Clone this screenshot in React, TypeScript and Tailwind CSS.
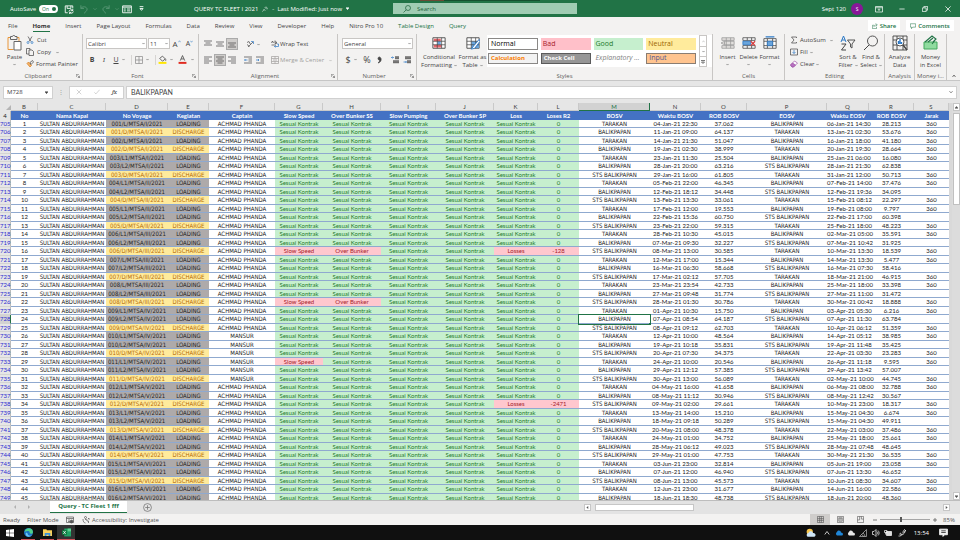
import { useState } from 'react';
import type { ReactNode } from 'react';
import clsx from 'clsx';

type Voyage = [string, string, string, string, string, string, string, string];

const FIRST_ROW = 705;
const SELECTED_ROW = 728;

// voyage, BOSV, waktu BOSV, ROB BOSV, EOSV, waktu EOSV, ROB EOSV, jarak
const T = 'TARAKAN';
const B = 'BALIKPAPAN';
const S = 'STS BALIKPAPAN';

const VOYAGES: Voyage[] = [
  ['001/L/MTSA/I/2021', T, '04-Jan-21 22:30', '37.062', B, '06-Jan-21 14:30', '28.213', '360'],
  ['001/D/MTSA/I/2021', B, '11-Jan-21 09:00', '64.137', T, '13-Jan-21 02:30', '53.676', '360'],
  ['002/L/MTSA/I/2021', T, '14-Jan-21 21:30', '51.047', B, '16-Jan-21 18:00', '41.180', '360'],
  ['002/D/MTSA/I/2021', B, '19-Jan-21 02:30', '38.999', T, '20-Jan-21 19:30', '28.664', '360'],
  ['003/L1/MTSA/I/2021', T, '23-Jan-21 11:30', '25.504', B, '25-Jan-21 06:00', '16.080', '360'],
  ['003/L2/MTSA/I/2021', B, '28-Jan-21 20:00', '63.216', S, '28-Jan-21 21:30', '62.838', ''],
  ['003/D/MTSA/I/2021', S, '29-Jan-21 16:00', '61.805', T, '31-Jan-21 12:00', '50.713', '360'],
  ['004/L1/MTSA/II/2021', T, '05-Feb-21 22:00', '46.345', B, '07-Feb-21 14:00', '37.476', '360'],
  ['004/L2/MTSA/II/2021', B, '12-Feb-21 18:12', '34.448', S, '12-Feb-21 19:36', '34.095', ''],
  ['004/D/MTSA/II/2021', S, '13-Feb-21 13:30', '33.061', T, '15-Feb-21 08:12', '22.297', '360'],
  ['005/L1/MTSA/II/2021', T, '17-Feb-21 12:00', '19.553', B, '19-Feb-21 08:00', '9.797', '360'],
  ['005/L2/MTSA/II/2021', B, '22-Feb-21 15:36', '60.750', S, '22-Feb-21 17:00', '60.398', ''],
  ['005/D/MTSA/II/2021', S, '23-Feb-21 22:00', '59.315', T, '25-Feb-21 18:00', '48.223', '360'],
  ['006/L1/MTSA/III/2021', T, '28-Feb-21 10:30', '45.015', B, '02-Mar-21 05:00', '35.591', '360'],
  ['006/L2/MTSA/III/2021', B, '07-Mar-21 09:30', '32.227', S, '07-Mar-21 10:42', '31.925', ''],
  ['006/D/MTSA/III/2021', S, '08-Mar-21 13:00', '30.585', T, '10-Mar-21 13:30', '18.539', '360'],
  ['007/L/MTSA/III/2021', T, '12-Mar-21 17:00', '15.344', B, '14-Mar-21 13:30', '5.477', '360'],
  ['007/L2/MTSA/III/2021', B, '16-Mar-21 06:30', '58.668', S, '16-Mar-21 07:30', '58.416', ''],
  ['007/D/MTSA/III/2021', S, '17-Mar-21 02:12', '57.705', T, '18-Mar-21 21:00', '46.915', '360'],
  ['008/L/MTSA/III/2021', T, '23-Mar-21 23:54', '42.733', B, '25-Mar-21 18:00', '33.398', '360'],
  ['008/L2/MTSA/III/2021', B, '27-Mar-21 09:48', '31.774', S, '27-Mar-21 11:00', '31.472', ''],
  ['008/D/MTSA/III/2021', S, '28-Mar-21 01:30', '30.786', T, '30-Mar-21 00:42', '18.888', '360'],
  ['009/L1/MTSA/IV/2021', T, '01-Apr-21 10:30', '15.750', B, '03-Apr-21 05:30', '6.216', '360'],
  ['009/L2/MTSA/IV/2021', B, '07-Apr-21 08:54', '64.187', S, '07-Apr-21 11:30', '63.784', ''],
  ['009/D/MTSA/IV/2021', S, '08-Apr-21 09:12', '62.703', T, '10-Apr-21 06:12', '51.359', '360'],
  ['010/L1/MTSA/IV/2021', T, '12-Apr-21 10:00', '48.564', B, '14-Apr-21 05:12', '38.985', '360'],
  ['010/L2/MTSA/IV/2021', B, '19-Apr-21 10:18', '35.831', S, '19-Apr-21 11:48', '35.425', ''],
  ['010/D/MTSA/IV/2021', S, '20-Apr-21 07:30', '34.375', T, '22-Apr-21 03:30', '23.283', '360'],
  ['011/L1/MTSA/IV/2021', T, '24-Apr-21 10:00', '20.546', B, '26-Apr-21 11:18', '9.595', '360'],
  ['011/L2/MTSA/IV/2021', B, '29-Apr-21 12:12', '57.385', S, '29-Apr-21 13:42', '57.007', ''],
  ['011/D/MTSA/IV/2021', S, '30-Apr-21 13:00', '56.089', T, '02-May-21 10:00', '44.745', '360'],
  ['012/L1/MTSA/V/2021', T, '04-May-21 16:00', '41.658', B, '06-May-21 08:00', '32.788', '360'],
  ['012/L2/MTSA/V/2021', B, '08-May-21 11:12', '30.946', S, '08-May-21 12:42', '30.567', ''],
  ['012/D/MTSA/V/2021', S, '09-May-21 02:00', '29.661', T, '10-May-21 23:00', '18.317', '360'],
  ['013/L1/MTSA/V/2021', T, '13-May-21 14:00', '15.210', B, '15-May-21 04:30', '6.674', '360'],
  ['013/L2/MTSA/V/2021', B, '18-May-21 09:18', '50.289', S, '15-May-21 04:30', '49.911', ''],
  ['013/D/MTSA/V/2021', S, '20-May-21 08:00', '48.378', T, '22-May-21 03:00', '37.486', '360'],
  ['014/L1/MTSA/V/2021', T, '24-May-21 01:00', '34.752', B, '25-May-21 18:00', '25.661', '360'],
  ['014/L2/MTSA/V/2021', B, '28-May-21 06:12', '49.023', S, '28-May-21 07:48', '48.645', ''],
  ['014/D/MTSA/V/2021', S, '29-May-21 01:00', '47.753', T, '30-May-21 21:30', '36.535', '360'],
  ['015/L1/MTSA/VI/2021', T, '03-Jun-21 23:00', '32.814', B, '05-Jun-21 19:00', '23.058', '360'],
  ['015/L2/MTSA/VI/2021', B, '07-Jun-21 12:00', '46.940', S, '07-Jun-21 13:30', '46.652', ''],
  ['015/D/MTSA/VI/2021', S, '08-Jun-21 13:00', '45.573', T, '10-Jun-21 08:30', '34.607', '360'],
  ['016/L1/MTSA/VI/2021', T, '12-Jun-21 23:00', '31.677', B, '14-Jun-21 16:00', '22.586', '360'],
  ['016/L2/MTSA/VI/2021', B, '18-Jun-21 18:30', '48.738', S, '18-Jun-21 20:00', '48.360', ''],
];

// penalty flags by sheet row: slow speed, over bunker SS, loss, loses R2
const FLAGS: Record<number, { slow?: boolean; bunker?: boolean; loss?: string }> = {
  720: { slow: true, bunker: true, loss: '-128' },
  726: { slow: true, bunker: true },
  733: { slow: true },
  738: { loss: '-2471' },
};

const COLUMNS = [
  { letter: 'B', title: 'No', width: 'w-[27px]' },
  { letter: 'C', title: 'Nama Kapal', width: 'w-[68px]' },
  { letter: 'D', title: 'No Voyage', width: 'w-[62px]' },
  { letter: 'E', title: 'Kegiatan', width: 'w-[41px]' },
  { letter: 'F', title: 'Captain', width: 'w-[66px]' },
  { letter: 'G', title: 'Slow Speed', width: 'w-[48px]' },
  { letter: 'H', title: 'Over Bunker SS', width: 'w-[58px]' },
  { letter: 'I', title: 'Slow Pumping', width: 'w-[55px]' },
  { letter: 'J', title: 'Over Bunker SP', width: 'w-[58px]' },
  { letter: 'K', title: 'Loss', width: 'w-[44px]' },
  { letter: 'L', title: 'Loses R2', width: 'w-[41px]' },
  { letter: 'M', title: 'BOSV', width: 'w-[71px]' },
  { letter: 'N', title: 'Waktu BOSV', width: 'w-[51px]' },
  { letter: 'O', title: 'ROB BOSV', width: 'w-[46px]' },
  { letter: 'P', title: 'EOSV', width: 'w-[80px]' },
  { letter: 'Q', title: 'Waktu EOSV', width: 'w-[42px]' },
  { letter: 'R', title: 'ROB EOSV', width: 'w-[45px]' },
  { letter: 'S', title: 'Jarak', width: 'w-[35px]' },
];

const TABS = ['File', 'Home', 'Insert', 'Page Layout', 'Formulas', 'Data', 'Review', 'View', 'Developer', 'Help', 'Nitro Pro 10', 'Table Design', 'Query'];

const GOOD = 'bg-[#c6efce] text-[#1f7a2c]';
const BAD = 'bg-[#ffc7ce] text-[#a61c2a]';

function Svg({ box = 16, className, children }: { box?: number; className?: string; children: ReactNode }) {
  return (
    <svg viewBox={`0 0 ${box} ${box}`} className={clsx('shrink-0', className)} fill="none" stroke="currentColor" strokeWidth={1.4} aria-hidden="true">
      {children}
    </svg>
  );
}

function Chevron({ className = 'h-1 w-1' }: { className?: string }) {
  return (
    <Svg box={8} className={className}>
      <path d="M1 2.5l3 3 3-3" />
    </Svg>
  );
}

function IconButton({ label, children, className }: { label: string; children: ReactNode; className?: string }) {
  return (
    <button aria-label={label} title={label} className={clsx('flex shrink-0 items-center justify-center', className)}>
      {children}
    </button>
  );
}

function TitleBar() {
  return (
    <header className="relative flex h-[17px] shrink-0 items-center bg-[#217346] text-white">
      <div className="absolute left-[420px] top-0 h-px w-6 bg-[#6b4a35]" />
      <div className="absolute left-[444px] top-0 h-px w-24 bg-[#15502f]" />
      <div className="flex w-[194px] shrink-0 items-center pl-2.5">
        <label htmlFor="autosave" className="w-[29px]">AutoSave</label>
        <span className="relative flex h-2 w-[19px] items-center rounded-full bg-white pl-[3px] text-[5px] text-[#217346]">
          <input id="autosave" type="checkbox" defaultChecked className="absolute inset-0 appearance-none" />
          On
          <span className="absolute right-[2px] h-1 w-1 rounded-full bg-[#217346]" />
        </span>
        <IconButton label="Save" className="ml-1.5">
          <Svg className="h-2.5 w-2.5">
            <path d="M14 7V3H2v11h4M5 3v4h6V3" />
            <path d="M8 12a3.4 3.4 0 016-1.5M14 8v2.6h-2.600M15 12a3.400 3.400 0 01-6 1.500M9 16v-2.600h2.600" />
          </Svg>
        </IconButton>
        <IconButton label="Undo" className="ml-[5px] gap-1 text-[#5d9a79]">
          <Svg className="h-2.5 w-2.5"><path d="M3 2v5h5M3 7c3-4 9-3 10 1 0 3-3 5-5 7" /></Svg>
          <Chevron />
        </IconButton>
        <IconButton label="Redo" className="ml-1 gap-1 text-[#5d9a79]">
          <Svg className="h-2.5 w-2.5"><path d="M13 2v5H8M13 7C10 3 4 4 3 8c0 3 3 5 5 7" /></Svg>
          <Chevron />
        </IconButton>
        <IconButton label="Form" className="ml-[3px]">
          <Svg className="h-2.5 w-2.5"><path d="M1 3h14v11H1zM1 5h14M3 8h3M8 8h5M3 11h3M8 11h5" /></Svg>
        </IconButton>
        <IconButton label="Customize" className="ml-[7px]">
          <Svg box={8} className="h-[5px] w-[5px]"><path d="M1 1h6M1.500 4h5L4 7z" /></Svg>
        </IconButton>
      </div>
      <div className="flex min-w-[199px] flex-[0_0_199px] items-center whitespace-nowrap">
        <span>QUERY TC FLEET I 2021</span>
        <Svg className="ml-1 h-1.5 w-1.5"><path d="M1 15l5-6M7 3l6 6M4 8l5 5M9 3a4 4 0 015 5" /></Svg>
        <span className="ml-1">-&nbsp; Last Modified: Just now</span>
        <Svg box={8} className="ml-1 h-[3px] w-[3px]"><path d="M0 2h8L4 7z" fill="currentColor" /></Svg>
      </div>
      <label className="flex h-[11px] w-[184px] items-center bg-[#a0ccb3] pl-2.5 text-[#1c6039]">
        <Svg className="h-2 w-2"><circle cx="10" cy="6" r="5" /><path d="M6.500 9.500L1 15" /></Svg>
        <input aria-label="Search" placeholder="Search" className="ml-1.5 w-full bg-transparent outline-none placeholder:text-[#1c6039]" />
      </label>
      <div className="ml-auto flex items-center">
        <span>Sept 120</span>
        <span className="mr-[-1px] ml-[5px] flex h-3 w-3 items-center justify-center rounded-full bg-[#881798] text-[5px]">S</span>
        <IconButton label="Ribbon display options" className="w-[34px]">
          <Svg className="h-2 w-2"><path d="M1 3h14v11H1zM1 5.500h14M8 12V8M6 9.500L8 7.500l2 2" /></Svg>
        </IconButton>
        <IconButton label="Minimize" className="w-3"><Svg className="h-1.5 w-1.5"><path d="M1 8h14" strokeWidth={2} /></Svg></IconButton>
        <IconButton label="Restore" className="w-[34px]"><Svg className="h-1.5 w-1.5"><path d="M1 5h10v10H1zM5 5V1h10v10h-4" strokeWidth={2} /></Svg></IconButton>
        <IconButton label="Close" className="mr-1.5 w-3"><Svg className="h-1.5 w-1.5"><path d="M1 1l14 14M15 1L1 15" strokeWidth={2} /></Svg></IconButton>
      </div>
    </header>
  );
}

function TabStrip() {
  return (
    <nav className="flex h-[17px] shrink-0 items-center gap-px pl-px text-[#444]">
      {TABS.map(tab => (
        <button key={tab} className="px-[7px] whitespace-nowrap">
          <span
            className={clsx(
              'flex h-[13px] items-center border-b pt-px',
              tab === 'Home' ? 'border-[#217346] font-bold text-[#333]' : 'border-transparent',
              (tab === 'Table Design' || tab === 'Query') && 'text-[#217346]',
            )}
          >
            {tab}
          </span>
        </button>
      ))}
      <div className="ml-auto flex gap-1.5 pr-1.5 font-semibold text-[#217346]">
        <button className="flex h-[11px] w-8 items-center justify-center gap-0.5 bg-white">
          <Svg className="h-1.5 w-1.5"><path d="M6 6H1v9h11v-5M5 11c0-5 4-6 8-6M10 1l4 4-4 4" /></Svg>
          Share
        </button>
        <button className="flex h-[11px] w-12 items-center justify-center gap-0.5 bg-white">
          <Svg className="h-1.5 w-1.5"><path d="M1 2h14v9H7l-3 4v-4H1z" /></Svg>
          Comments
        </button>
      </div>
    </nav>
  );
}

function Group({ name, width, launcher, children }: { name: string; width: string; launcher?: boolean; children: ReactNode }) {
  return (
    <section className={clsx('flex flex-col border-r border-[#c8c6c4]', width)}>
      <div className="flex h-[38px] items-start pt-px">{children}</div>
      <div className="flex h-2 items-center">
        <span className="flex-1 overflow-hidden text-center whitespace-nowrap text-[#605e5c]">{name}</span>
        {launcher && (
          <IconButton label={`${name} settings`} className="mr-0.5">
            <Svg className="h-1 w-1"><path d="M1 12V1h11M6 6l8 8M14 7v7H7" strokeWidth={2} /></Svg>
          </IconButton>
        )}
      </div>
    </section>
  );
}

function BigButton({ lines, width, arrow, children }: { lines: string[]; width: string; arrow?: 'below' | 'inline'; children: ReactNode }) {
  return (
    <button className={clsx('flex shrink-0 flex-col items-center leading-2 whitespace-nowrap', width)}>
      <span className="mb-0.5 flex h-4 items-center">{children}</span>
      {lines.map((line, i) => (
        <span key={line} className="flex items-center gap-0.5">
          {line}
          {arrow === 'inline' && i === lines.length - 1 && <Chevron className="h-[3px] w-[3px]" />}
        </span>
      ))}
      {arrow === 'below' && <Chevron className="mt-0.5 h-[3px] w-[3px]" />}
    </button>
  );
}

function Align({ lines }: { lines: string }) {
  return <Svg className="h-2 w-2"><path d={lines} /></Svg>;
}

function Combo({ label, value, className }: { label: string; value: string; className: string }) {
  return (
    <span className={clsx('relative flex h-[11px] items-center border border-[#c8c6c4] bg-white', className)}>
      <select aria-label={label} className="w-full appearance-none bg-transparent pl-px outline-none">
        <option>{value}</option>
      </select>
      <Chevron className="pointer-events-none absolute right-px h-[3px] w-[3px]" />
    </span>
  );
}

function Separator() {
  return <span className="h-2.5 w-px shrink-0 bg-[#d6d4d2]" />;
}

function Ribbon() {
  return (
    <div className="flex h-[46px] shrink-0 text-[#444]">
      <Group name="Clipboard" width="w-[83px] shrink-0" launcher>
        <BigButton lines={['Paste']} width="ml-1 w-[21px]" arrow="below">
          <svg viewBox="0 0 30 32" className="h-4 w-[15px]" fill="none" strokeWidth="2">
            <path d="M7 5H2v24h11M19 5h5v7" stroke="#e8963a" />
            <path d="M7 3h4c0-3 5-3 5 0h4v6H7z" fill="#f3f2f1" stroke="#666" />
            <path d="M14 13h14v17H14z" fill="#fff" stroke="#666" />
          </svg>
        </BigButton>
        <div className="flex flex-col gap-0.5 pl-px">
          <button className="flex h-2.5 items-center gap-[3px]">
            <Svg className="h-2 w-2"><path d="M4 1l6 10M12 1L6 11" /><circle cx="4" cy="13" r="2" stroke="#2b78c5" /><circle cx="12" cy="13" r="2" stroke="#2b78c5" /></Svg>
            Cut
          </button>
          <button className="flex h-2.5 items-center gap-[3px]">
            <Svg className="h-2 w-2"><path d="M6 12H1V1h7v3M6 4h6l3 3v8H6z" /></Svg>
            Copy
            <Chevron className="ml-0.5 h-[3px] w-[3px]" />
          </button>
          <button className="flex h-2.5 items-center gap-0.5 whitespace-nowrap">
            <Svg className="h-2 w-2"><path d="M2 7l6 7 3-3-6-7z" fill="#f2b36b" stroke="#d97b1a" /><path d="M8 5l5-4 2 3-5 5z" /></Svg>
            Format Painter
          </button>
        </div>
      </Group>

      <Group name="Font" width="w-[116px] shrink-0" launcher>
        <div className="flex w-full flex-col gap-[5px] pt-[3px] pl-[3px]">
          <div className="flex items-center">
            <Combo label="Font" value="Calibri" className="w-[61px]" />
            <Combo label="Font size" value="11" className="ml-px w-[22px]" />
            <IconButton label="Increase font size" className="w-[13px] text-[8px]">A<Svg box={8} className="mb-1 h-[3px] w-[3px] text-[#2b78c5]"><path d="M1 6l3-4 3 4" /></Svg></IconButton>
            <IconButton label="Decrease font size" className="w-[13px] text-[7px]">A<Svg box={8} className="mb-1 h-[3px] w-[3px] text-[#2b78c5]"><path d="M1 2l3 4 3-4" /></Svg></IconButton>
          </div>
          <div className="flex h-[11px] items-center text-[7px]">
            <IconButton label="Bold" className="w-3 font-bold">B</IconButton>
            <IconButton label="Italic" className="w-3 font-serif italic">I</IconButton>
            <IconButton label="Underline" className="w-3 underline">U</IconButton>
            <Chevron className="mr-1.5 h-[3px] w-[3px]" />
            <Separator />
            <IconButton label="Borders" className="w-3.5 text-[#888]"><Svg className="h-2 w-2"><path d="M1 1h14v14H1zM8 1v14M1 8h14" /></Svg></IconButton>
            <Chevron className="mr-1.5 h-[3px] w-[3px]" />
            <Separator />
            <IconButton label="Fill color" className="w-3">
              <Svg className="h-[9px] w-[9px]"><path d="M3 6l5-4 5 5-5 4zM13 7c2 2 1 3 0 3" /><path d="M1 14h14" stroke="#ffe600" strokeWidth={3.500} /></Svg>
            </IconButton>
            <Chevron className="mx-0.5 h-[3px] w-[3px]" />
            <IconButton label="Font color" className="w-3.5">
              <Svg className="h-[9px] w-[9px]"><path d="M4 10l4-9 4 9M5.500 7h5" /><path d="M1 14h14" stroke="#e02b20" strokeWidth={3.500} /></Svg>
            </IconButton>
            <Chevron className="ml-0.5 h-[3px] w-[3px]" />
          </div>
        </div>
      </Group>

      <Group name="Alignment" width="w-[139px] shrink-0" launcher>
        <div className="flex w-[65px] shrink-0 flex-col gap-1 pt-[3px] pl-[3px]">
          <div className="flex h-3 items-center">
            <IconButton label="Top align" className="w-3"><Align lines="M0 2h16M3 6h10M0 10h16" /></IconButton>
            <IconButton label="Middle align" className="w-3"><Align lines="M0 4h16M3 8h10M0 12h16" /></IconButton>
            <IconButton label="Bottom align" className="h-3 w-3 border border-[#aaa] bg-[#cfcdcb]"><Align lines="M0 6h16M3 10h10M0 14h16" /></IconButton>
            <span className="ml-1"><Separator /></span>
            <IconButton label="Orientation" className="ml-1 gap-[3px]">
              <Svg className="h-2 w-2"><path d="M2 9l5 4M2 5l4-2 3 6M4 14L14 4" /><path d="M10 3h5v5" stroke="#2b78c5" /></Svg>
              <Chevron className="h-[3px] w-[3px]" />
            </IconButton>
          </div>
          <div className="flex h-3 items-center">
            <IconButton label="Align left" className="w-3"><Align lines="M0 2h16M0 6h10M0 10h16M0 14h10" /></IconButton>
            <IconButton label="Center" className="h-3 w-3 border border-[#aaa] bg-[#cfcdcb]"><Align lines="M0 2h16M3 6h10M0 10h16M3 14h10" /></IconButton>
            <IconButton label="Align right" className="w-3"><Align lines="M0 2h16M6 6h10M0 10h16M6 14h10" /></IconButton>
            <IconButton label="Decrease indent" className="ml-1 w-3"><Svg className="h-2 w-2"><path d="M0 2h16M9 6h7M9 10h7M0 14h16" /><path d="M7 8H1M3 6L1 8l2 2" stroke="#2b78c5" /></Svg></IconButton>
            <IconButton label="Increase indent" className="w-3"><Svg className="h-2 w-2"><path d="M0 2h16M9 6h7M9 10h7M0 14h16" /><path d="M0 8h6M4 6l2 2-2 2" stroke="#2b78c5" /></Svg></IconButton>
          </div>
        </div>
        <div className="ml-[7px] flex flex-col gap-1 pt-[3px]">
          <button className="flex h-3 items-center gap-px">
            <Svg className="h-2 w-2"><path d="M1 6l2-4 2 4M8 1v6M8 4h3v3H8M1 10h9" /><path d="M12 8h3v5H7M9 11l-2 2 2 2" stroke="#2b78c5" /></Svg>
            Wrap Text
          </button>
          <button className="flex h-3 items-center gap-px whitespace-nowrap text-[#a19f9d]" disabled>
            <Svg className="h-2 w-2"><path d="M1 1h14v14H1zM1 5h14M1 11h14M8 1v4M8 11v4M4 8h8" /></Svg>
            Merge &amp; Center
            <Chevron className="ml-1 h-[3px] w-[3px]" />
          </button>
        </div>
      </Group>

      <Group name="Number" width="w-[79px] shrink-0" launcher>
        <div className="flex w-full flex-col gap-[5px] pt-[3px] pl-1">
          <Combo label="Number format" value="General" className="w-[71px]" />
          <div className="flex h-[11px] items-center text-[8px]">
            <IconButton label="Accounting" className="w-3 text-[9px]">$</IconButton>
            <Chevron className="mr-1 h-[3px] w-[3px]" />
            <IconButton label="Percent" className="w-3 text-[9px]">%</IconButton>
            <IconButton label="Comma" className="w-3 font-bold">
              <Svg className="h-2 w-2"><path d="M9 2a3 3 0 100 6c1 2-1 4-3 6 5-1 7-5 6-9-1-2-2-3-3-3z" fill="currentColor" /></Svg>
            </IconButton>
            <span className="ml-[3px]"><Separator /></span>
            <IconButton label="Increase decimal" className="w-3.5"><Svg className="h-2 w-2"><path d="M6 3H1M3 1L1 3l2 2" stroke="#2b78c5" /><path d="M9 1h2v5H9zM13 1h2v5h-2zM5 9h2v5H5zM9 9h2v5H9zM13 9h2v5h-2z" /></Svg></IconButton>
            <IconButton label="Decrease decimal" className="w-2.5"><Svg className="h-2 w-2"><path d="M1 12h6M5 10l2 2-2 2" stroke="#2b78c5" /><path d="M5 1h2v5H5zM9 1h2v5H9zM13 1h2v5h-2zM9 9h2v5H9zM13 9h2v5h-2z" /></Svg></IconButton>
          </div>
        </div>
      </Group>

      <Group name="Styles" width="min-w-[296px] flex-1">
        <BigButton lines={['Conditional', 'Formatting']} width="ml-0.5 w-10" arrow="inline">
          <Svg className="h-3.5 w-3.5"><path d="M1 2h14v12H1z" fill="#fff" strokeWidth={1} /><path d="M2 3h8v3H2zM2 10h9v3H2z" fill="#e8676d" stroke="none" /><path d="M6 6h4v4H6z" fill="#6aa5dc" stroke="none" /><path d="M1 6h14M1 10h14M6 2v12M11 2v12" strokeWidth={0.800} /></Svg>
        </BigButton>
        <BigButton lines={['Format as', 'Table']} width="w-[27px]" arrow="inline">
          <Svg className="h-3.5 w-3.5"><path d="M1 2h14v12H1z" fill="#fff" strokeWidth={1} /><path d="M6 6h9v8H6z" fill="#6aa5dc" stroke="none" /><path d="M1 6h14M1 10h14M6 2v12M11 2v12" strokeWidth={0.800} /><path d="M15 4L9 11l-3 4 4-1 6-8z" fill="#fff" stroke="#2b78c5" strokeWidth={1} /></Svg>
        </BigButton>
        <div className="ml-px flex h-8 flex-1 bg-white text-[7px] leading-2">
          <div className="grid flex-1 grid-cols-4 gap-x-[3px] gap-y-[3px] p-[3px] pl-px">
            <button className="border border-[#8a8886] bg-white pl-0.5 text-left text-black">Normal</button>
            <button className="bg-[#ffc0c9] pl-0.5 text-left text-[#a61c2a]">Bad</button>
            <button className="bg-[#c6efce] pl-0.5 text-left text-[#1f7a2c]">Good</button>
            <button className="bg-[#ffeb9c] pl-0.5 text-left text-[#9c6500]">Neutral</button>
            <button className="border border-[#8a8886] bg-[#f2f2f2] pl-0.5 text-left text-[6px] font-bold text-[#fa7d00]">Calculation</button>
            <button className="border border-[#5a5a5a] bg-[#969696] pl-0.5 text-left text-[6px] font-bold text-white">Check Cell</button>
            <button className="pl-0.5 text-left whitespace-nowrap text-[#7f7f7f] italic">Explanatory ...</button>
            <button className="border border-[#8a7d72] bg-[#ffc48f] pl-0.5 text-left text-[#54548c]">Input</button>
          </div>
          <div className="mr-[5px] grid w-2 grid-rows-3 border border-[#c8c6c4]">
            <IconButton label="Scroll up" className="text-[#aaa]"><Svg box={8} className="h-[3px] w-[3px]"><path d="M1 6l3-4 3 4" /></Svg></IconButton>
            <IconButton label="Scroll down" className="border-t border-[#c8c6c4]"><Chevron className="h-[3px] w-[3px]" /></IconButton>
            <IconButton label="More styles" className="border-t border-[#c8c6c4]"><Svg box={8} className="h-1 w-1"><path d="M0 1h8M1 4h6L4 7z" /></Svg></IconButton>
          </div>
        </div>
      </Group>

      <Group name="Cells" width="w-[72px] shrink-0">
        <BigButton lines={['Insert']} width="ml-1 w-[21px]" arrow="below">
          <Svg className="h-3.5 w-3.5 text-[#999]"><path d="M1 2h14v3H1zM1 11h14v3H1zM4 6h11v4H4zM6 2v12M11 2v12M4 6L0 8l4 2" fill="#e1dfdd" strokeWidth={0.900} /></Svg>
        </BigButton>
        <BigButton lines={['Delete']} width="w-[21px]" arrow="below">
          <Svg className="h-3.5 w-3.5"><path d="M1 2h14v3H1zM1 11h14v3H1zM6 2v3M11 2v3M6 11v3M11 11v3" strokeWidth={0.900} fill="#fff" /><path d="M1 6h9v4H1z" fill="#6aa5dc" stroke="#2b78c5" strokeWidth={0.900} /><path d="M10 6l5 5M15 6l-5 5" stroke="#d83b3b" /></Svg>
        </BigButton>
        <BigButton lines={['Format']} width="w-[21px]" arrow="below">
          <Svg className="h-3.5 w-3.5"><path d="M3 1h10" stroke="#2b78c5" /><path d="M1 3h14v11H1zM1 6h14M1 11h14M5 3v11M11 3v11" strokeWidth={0.900} fill="#fff" /><path d="M5 6h6v5H5z" fill="#6aa5dc" stroke="#2b78c5" strokeWidth={0.900} /></Svg>
        </BigButton>
      </Group>

      <Group name="Editing" width="w-[100px] shrink-0">
        <div className="flex w-[47px] shrink-0 flex-col gap-0.5 pl-[5px]">
          <button className="flex h-2.5 items-center gap-0.5">
            <Svg className="h-2 w-2"><path d="M13 4V2H3l5 6-5 6h10v-2" /></Svg>
            AutoSum
            <Chevron className="ml-0.5 h-[3px] w-[3px]" />
          </button>
          <button className="flex h-2.5 items-center gap-0.5">
            <Svg className="h-2 w-2"><path d="M1 2h14v12H1z" /><path d="M8 4v7M5 8l3 3 3-3" stroke="#2b78c5" /></Svg>
            Fill
            <Chevron className="h-[3px] w-[3px]" />
          </button>
          <button className="flex h-2.5 items-center gap-0.5">
            <Svg className="h-2 w-2"><path d="M1 10l8-8 6 4-8 8H4z" stroke="#9b4fa5" fill="#fff" /><path d="M1 10l4-4 6 4-4 4H4z" fill="#b871c1" stroke="#9b4fa5" /></Svg>
            Clear
            <Chevron className="h-[3px] w-[3px]" />
          </button>
        </div>
        <BigButton lines={['Sort &', 'Filter']} width="ml-1 w-6" arrow="inline">
          <Svg className="h-4 w-4"><path d="M1 7l2.500-6L6 7M2 5h3" stroke="#2b78c5" strokeWidth={1} /><path d="M1.500 9H6l-4.500 6H6" strokeWidth={1} /><path d="M7.500 5H15l-3 4v4l-1.500-1V9z" strokeWidth={0.900} /></Svg>
        </BigButton>
        <BigButton lines={['Find &', 'Select']} width="w-[22px]" arrow="inline">
          <Svg className="h-4 w-4"><circle cx="9.500" cy="6" r="5" strokeWidth={0.900} /><path d="M6 10l-5 5" strokeWidth={1} /></Svg>
        </BigButton>
      </Group>

      <Group name="Analysis" width="w-[30px] shrink-0">
        <BigButton lines={['Analyze', 'Data']} width="w-[29px]">
          <Svg className="h-4 w-4"><path d="M1 1h14v14H1zM1 5h14M1 10h14M5 1v14M11 1v14" strokeWidth={0.900} /><circle cx="8" cy="7" r="4" fill="#fff" strokeWidth={0.900} /><path d="M6.500 9V6M8 9V4M9.500 9V7" stroke="#2b78c5" /><path d="M11 10l4 5" /></Svg>
        </BigButton>
      </Group>
      <Group name="Money i..." width="w-8 shrink-0">
        <BigButton lines={['Money', 'in Excel']} width="w-[31px]">
          <Svg className="h-4 w-4 text-[#217346]"><path d="M1 7h13v7H1z" fill="#8fdb9f" stroke="#43a85c" strokeWidth={1} /><path d="M2 7l7-6 4 3-3 3M5 7l5-4M13 4l-4 5" strokeWidth={1.100} /></Svg>
        </BigButton>
      </Group>
      <div className="flex w-[13px] shrink-0 items-end justify-center pb-0.5">
        <IconButton label="Collapse ribbon"><Svg box={8} className="h-1 w-1"><path d="M1 6l3-4 3 4" /></Svg></IconButton>
      </div>
    </div>
  );
}

function FormulaBar() {
  return (
    <div className="flex h-[23px] shrink-0 items-center gap-0.5 border-t border-[#c6c6c6] bg-[#e6e6e6] pr-[3px] pl-[3px] text-[#444]">
      <span className="relative flex h-[13px] w-[50px] items-center border border-[#d0d0d0] bg-white">
        <input aria-label="Name box" defaultValue="M728" className="w-full bg-transparent pl-[3px] outline-none" />
        <Svg box={8} className="absolute right-1 h-[3px] w-[3px]"><path d="M0 2h8L4 7z" fill="currentColor" /></Svg>
      </span>
      <span className="w-3 text-center text-[#999]">⋮</span>
      <div className="flex h-[13px] w-[55px] items-center justify-around border border-[#d0d0d0] bg-white text-[#aaa]">
        <IconButton label="Cancel"><Svg className="h-1.5 w-1.5"><path d="M2 2l12 12M14 2L2 14" /></Svg></IconButton>
        <IconButton label="Enter"><Svg className="h-1.5 w-1.5"><path d="M1 9l4 4L15 2" /></Svg></IconButton>
        <IconButton label="Insert function" className="font-serif text-[7px] text-[#333] italic">fx</IconButton>
      </div>
      <span className="relative flex h-[13px] flex-1 items-center border border-[#d0d0d0] bg-white">
        <input aria-label="Formula" defaultValue="BALIKPAPAN" className="w-full bg-transparent pl-1 font-[Lato,sans-serif] text-[7px] outline-none" />
        <Chevron className="absolute right-[3px] h-1 w-1" />
      </span>
    </div>
  );
}

function SheetRow({ voyage, index }: { voyage: Voyage; index: number }) {
  const row = FIRST_ROW + index;
  const [code, bosv, bosvTime, bosvRob, eosv, eosvTime, eosvRob, distance] = voyage;
  const discharge = code.includes('/D/');
  const kind = discharge ? 'bg-[#ffeb9c] text-[#b56a05]' : 'bg-[#aeaaaa] text-[#222]';
  const flags = FLAGS[row] ?? {};
  const selected = row === SELECTED_ROW;
  const cell = 'border-b border-[#8fa9cf] p-0';
  const caps = "font-['DejaVu_Sans_Condensed',Lato,sans-serif]";

  return (
    <tr className="h-2 leading-[7px] even:h-[9px] even:leading-2">
      <th
        scope="row"
        className={clsx(
          'border-r border-b p-0 font-normal text-[#2b2bd0]',
          selected ? 'border-r-[#217346] border-b-[#d2d2d2] bg-[#d2d2d2]' : 'border-r-[#bbb] border-b-[#d4d4d4] bg-[#e6e6e6]',
        )}
      >
        {row}
      </th>
      <td className={cell}>{index + 1}</td>
      <td className={clsx(cell, caps)}>SULTAN ABDURRAHMAN</td>
      <td className={clsx(cell, caps, kind)}>{code}</td>
      <td className={clsx(cell, caps, kind)}>{discharge ? 'DISCHARGE' : 'LOADING'}</td>
      <td className={clsx(cell, caps)}>{row >= 730 && row <= 735 ? 'MANSUR' : 'ACHMAD PHANDA'}</td>
      <td className={clsx(cell, flags.slow ? BAD : GOOD)}>{flags.slow ? 'Slow Speed' : 'Sesuai Kontrak'}</td>
      <td className={clsx(cell, flags.bunker ? BAD : GOOD)}>{flags.bunker ? 'Over Bunker' : 'Sesuai Kontrak'}</td>
      <td className={clsx(cell, GOOD)}>Sesuai Kontrak</td>
      <td className={clsx(cell, GOOD)}>Sesuai Kontrak</td>
      <td className={clsx(cell, flags.loss ? BAD : GOOD)}>{flags.loss ? 'Losses' : 'Sesuai Kontrak'}</td>
      <td className={clsx(cell, flags.loss ? BAD : GOOD)}>{flags.loss ?? '0'}</td>
      <td className={clsx(cell, caps, selected && 'relative outline outline-[#217346]')}>
        {bosv}
        {selected && <span className="absolute -right-px -bottom-0.5 h-0.5 w-0.5 bg-[#217346]" />}
      </td>
      <td className={cell}>{bosvTime}</td>
      <td className={cell}>{bosvRob}</td>
      <td className={clsx(cell, caps)}>{eosv}</td>
      <td className={cell}>{eosvTime}</td>
      <td className={cell}>{eosvRob}</td>
      <td className={cell}>{distance}</td>
    </tr>
  );
}

function Sheet() {
  return (
    <main className="flex min-h-0 flex-1 bg-[#d9d9d9]">
      <div className="flex-1 overflow-hidden">
        <table className="w-full table-fixed border-separate border-spacing-0 bg-white text-center font-[Lato,sans-serif] text-[6px] whitespace-nowrap text-[#1a1a1a]">
          <colgroup>
            <col className="w-[11px]" />
            {COLUMNS.map(col => <col key={col.letter} className={col.width} />)}
          </colgroup>
          <thead>
            <tr className="h-2 bg-[#e6e6e6] leading-[7px] text-[#444]">
              <th className="p-0" aria-label="Select all">
                <Svg box={8} className="ml-auto h-[5px] w-[5px] text-[#b5b5b5]"><path d="M8 0v8H0z" fill="currentColor" stroke="none" /></Svg>
              </th>
              {COLUMNS.map(col => (
                <th key={col.letter} className={clsx('border-r border-b p-0 font-normal', col.letter === 'M' ? 'border-[#217346] bg-[#d2d2d2] text-[#217346]' : 'border-[#c9c9c9]')}>{col.letter}</th>
              ))}
            </tr>
            <tr className="h-[9px] leading-[9px]">
              <th className="border-r border-[#bbb] bg-[#e6e6e6] p-0 font-normal">4</th>
              {COLUMNS.map(col => (
                <th key={col.letter} className="bg-[#4472c4] p-0 font-bold text-white">{col.title}</th>
              ))}
            </tr>
          </thead>
          <tbody>
            {VOYAGES.map((voyage, i) => <SheetRow key={voyage[0]} voyage={voyage} index={i} />)}
          </tbody>
        </table>
      </div>
      <div className="ml-[3px] flex w-2 shrink-0 flex-col items-center bg-[#dcdcdc] text-[#555]">
        <IconButton label="Scroll up" className="h-2 w-[7px] border border-[#c6c6c6] bg-white"><Svg box={8} className="h-[3px] w-[3px]"><path d="M0 6h8L4 1z" fill="currentColor" /></Svg></IconButton>
        <div className="mt-0.5 h-[92px] w-[7px] border border-[#c0c0c0] bg-white" />
        <IconButton label="Scroll down" className="mt-auto h-2 w-[7px] border border-[#c6c6c6] bg-white"><Svg box={8} className="h-[3px] w-[3px]"><path d="M0 2h8L4 7z" fill="currentColor" /></Svg></IconButton>
      </div>
    </main>
  );
}

function SheetTabs() {
  return (
    <div className="flex h-3.5 shrink-0 items-start border-t border-[#bdbdbd] bg-[#e3e3e3] text-[#555]">
      <div className="flex h-3 w-[50px] items-center justify-center gap-2.5 pr-1.5 text-[#b0b0b0]">
        <IconButton label="Previous sheet"><Svg box={8} className="h-1 w-1"><path d="M6 0v8L2 4z" fill="currentColor" stroke="none" /></Svg></IconButton>
        <IconButton label="Next sheet"><Svg box={8} className="h-1 w-1"><path d="M2 0v8l4-4z" fill="currentColor" stroke="none" /></Svg></IconButton>
      </div>
      <button className="h-3 w-[77px] border-b border-[#217346] bg-white text-[6px] leading-[11px] font-bold whitespace-nowrap text-[#217346]">Query - TC Fleet 1 fff</button>
      <IconButton label="New sheet" className="ml-4 h-3">
        <Svg className="h-[9px] w-[9px] text-[#777]"><circle cx="8" cy="8" r="7" /><path d="M8 4v8M4 8h8" /></Svg>
      </IconButton>
      <div className="ml-auto flex h-3 w-[376px] items-center">
        <IconButton label="Scroll left" className="h-[7px] w-[7px] border border-[#c6c6c6] bg-white"><Svg box={8} className="h-[3px] w-[3px]"><path d="M6 0v8L1 4z" fill="currentColor" stroke="none" /></Svg></IconButton>
        <div className="ml-1 h-[7px] w-[99px] border border-[#c6c6c6] bg-white" />
        <IconButton label="Scroll right" className="mr-[10px] ml-auto h-[7px] w-[7px] border border-[#c6c6c6] bg-white"><Svg box={8} className="h-[3px] w-[3px]"><path d="M2 0v8l5-4z" fill="currentColor" stroke="none" /></Svg></IconButton>
      </div>
    </div>
  );
}

function StatusBar() {
  const [zoom, setZoom] = useState(85);

  return (
    <div className="flex h-[11px] shrink-0 items-center text-[#555]">
      <span className="w-[27px] shrink-0 pl-[3px]">Ready</span>
      <span className="w-[39px] shrink-0 whitespace-nowrap">Filter Mode</span>
      <Svg className="h-2 w-2"><path d="M1 2h14v11H1zM1 5h14M4 8h4M4 11h4" /><circle cx="11" cy="11" r="3" fill="currentColor" /></Svg>
      <button className="ml-2 flex items-center gap-0.5 whitespace-nowrap">
        <Svg className="h-2 w-2"><circle cx="7" cy="3" r="2" /><path d="M2 6c0 5 2 8 5 8M6 7h3l1 3h3v4M12 4l3 3M15 4l-3 3" /></Svg>
        Accessibility: Investigate
      </button>
      <div className="ml-auto flex items-center">
        <IconButton label="Normal view" className="h-[11px] w-5 bg-[#cfcdcb]"><Svg className="h-[7px] w-[7px]"><path d="M1 1h14v14H1zM1 6h14M1 10h14M6 1v14M10 1v14" /></Svg></IconButton>
        <IconButton label="Page layout view" className="w-5"><Svg className="h-[7px] w-[7px]"><path d="M1 1h14v14H1zM4 4h8v8H4zM5 6h6M5 9h6" /></Svg></IconButton>
        <IconButton label="Page break view" className="w-5"><Svg className="h-[7px] w-[7px]"><path d="M1 1h14v14H1zM6 1v8H1M10 1v6h5" /></Svg></IconButton>
        <IconButton label="Zoom out" className="w-2.5"><Svg className="h-1 w-1"><path d="M0 8h16" strokeWidth={3} /></Svg></IconButton>
        <input
          type="range"
          aria-label="Zoom"
          min={10}
          max={190}
          value={zoom}
          onChange={e => setZoom(Number(e.target.value))}
          className="h-2 w-[50px] appearance-none bg-transparent [&::-webkit-slider-runnable-track]:h-px [&::-webkit-slider-runnable-track]:bg-[#a6a6a6] [&::-webkit-slider-thumb]:-mt-0.5 [&::-webkit-slider-thumb]:h-[5px] [&::-webkit-slider-thumb]:w-0.5 [&::-webkit-slider-thumb]:appearance-none [&::-webkit-slider-thumb]:bg-[#555]"
        />
        <IconButton label="Zoom in" className="w-2.5"><Svg className="h-1 w-1"><path d="M0 8h16M8 0v16" strokeWidth={3} /></Svg></IconButton>
        <span className="w-5 pl-[3px]">{zoom}%</span>
      </div>
    </div>
  );
}

function Taskbar() {
  return (
    <footer className="flex h-[15px] shrink-0 items-center bg-[#101010] text-white">
      <IconButton label="Start" className="w-[19px]">
        <Svg className="h-2 w-2"><path d="M0 2l7-1v6.500H0zM8 1l8-1v7.500H8zM0 8.500h7V15l-7-1zM8 8.500h8V16l-8-1z" fill="currentColor" stroke="none" /></Svg>
      </IconButton>
      <IconButton label="Edge" className="h-full w-[18px]">
        <span className="flex h-full w-3.5 items-center justify-center border-b border-[#d0525a]">
          <Svg className="h-[9px] w-[9px]"><circle cx="8" cy="8" r="8" fill="#1b73c4" stroke="none" /><path d="M1 7c1-8 14-9 15 0 0 4-5 4-6 2 1-3-3-5-9-2z" fill="#4fd08a" stroke="none" /><path d="M6 9c0 4 4 6 8 4-3 4-11 3-11-2 0-2 1-3 3-2z" fill="#6cc8f2" stroke="none" /></Svg>
        </span>
      </IconButton>
      <IconButton label="File Explorer" className="h-full w-5">
        <span className="flex h-full w-3.5 items-center justify-center border-b border-[#d0525a]">
          <Svg className="h-[9px] w-[9px]"><path d="M0 2h6l1 2h9v10H0z" fill="#f9cf5c" stroke="none" /><path d="M3 14V9h10v5h-3v-2H6v2z" fill="#3a8fd8" stroke="none" /></Svg>
        </span>
      </IconButton>
      <IconButton label="Excel" className="h-full w-[18px] border-b border-[#d0525a] bg-[#333]">
        <svg viewBox="0 0 16 16" className="h-[9px] w-[9px]" fill="none" aria-hidden="true">
          <path d="M4 1h12v14H4z" fill="#21a366" />
          <path d="M10 1h6v5h-6z" fill="#5fd08f" />
          <path d="M0 4h9v8H0z" fill="#107c41" />
          <path d="M2.500 5.500l4 5M6.500 5.500l-4 5" stroke="#fff" strokeWidth="1.400" />
        </svg>
      </IconButton>
      <div className="ml-auto flex items-center gap-1">
        <Svg className="mr-1 h-2.5 w-2.5"><circle cx="6" cy="6" r="5" fill="#f9c64a" stroke="none" /><path d="M4 14a3 3 0 010-6c1-4 7-3 7 0 5-1 6 6 1 6z" fill="#cfe6f7" stroke="none" /></Svg>
        <Svg box={8} className="mr-px h-1.5 w-1.5"><path d="M1 6l3-4 3 4" strokeWidth={1} /></Svg>
        <Svg className="h-2 w-2"><path d="M4 13a4 4 0 010-7c2-5 8-3 8 1 5 0 5 6 1 6z" fill="#1f86d8" stroke="none" /></Svg>
        <Svg className="h-2 w-2"><path d="M4 13a4 4 0 010-7c2-5 8-3 8 1 5 0 5 6 1 6z" fill="#e6e6e6" stroke="none" /></Svg>
        <Svg className="h-2 w-2 text-[#bbb]"><path d="M1 15L15 1v14zM5 11a7 7 0 014 4M8 8a10 10 0 014 7" /></Svg>
        <Svg className="ml-px h-2 w-2"><path d="M1 5h3l4-4v14l-4-4H1zM10 5c2 2 2 4 0 6M12 3c3 3 3 7 0 10" /></Svg>
        <Svg className="h-2 w-2"><path d="M5 5h10v8H5z" fill="#ddd" /><path d="M1 3h5v4H1zM3 7v4" /></Svg>
        <Svg className="ml-0.5 h-2 w-2"><path d="M1 14c5 1 8-3 5-5s-4 4 1 3 7-5 8-10M9 7l4-6 2 2-5 6" /></Svg>
        <span className="ml-1 text-[6px]">13:54</span>
        <Svg className="mr-3 ml-1.5 h-[9px] w-[9px]"><path d="M1 2h14v10h-5l-3 3v-3H1z" fill="#eee" /><path d="M4 5h8M4 8h8" stroke="#222" /></Svg>
      </div>
    </footer>
  );
}

export default function App() {
  return (
    <div className="flex h-screen flex-col overflow-hidden bg-[#f3f2f1] font-['Open_Sans','Noto_Sans',sans-serif] text-[6px] leading-2">
      <TitleBar />
      <TabStrip />
      <Ribbon />
      <FormulaBar />
      <Sheet />
      <SheetTabs />
      <StatusBar />
      <Taskbar />
    </div>
  );
}
